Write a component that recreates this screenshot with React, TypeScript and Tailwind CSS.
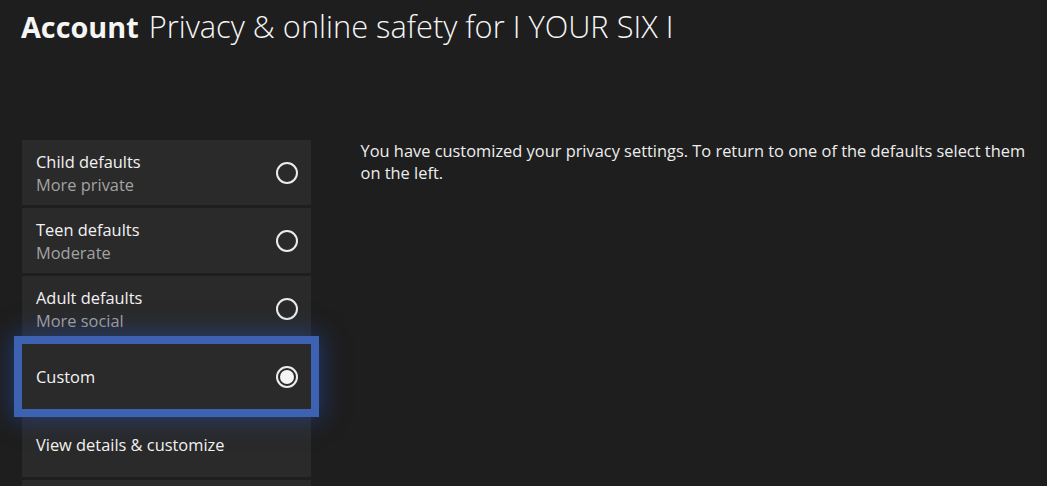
import React from "react";

interface Option {
  title: string;
  subtitle?: string;
  selected?: boolean;
  radio?: boolean;
}

const options: Option[] = [
  { title: "Child defaults", subtitle: "More private", radio: true },
  { title: "Teen defaults", subtitle: "Moderate", radio: true },
  { title: "Adult defaults", subtitle: "More social", radio: true },
  { title: "Custom", radio: true, selected: true },
  { title: "View details & customize" },
];

const Radio = ({ selected }: { selected?: boolean }) => (
  <svg width="24" height="24" viewBox="0 0 24 24" className="shrink-0">
    <circle cx="12" cy="12" r="10" fill="none" stroke="#ececec" strokeWidth="2" />
    {selected && <circle cx="12" cy="12" r="7" fill="#f4f4f4" />}
  </svg>
);

const OptionRow = ({ option }: { option: Option }) => {
  const focused = option.selected;
  return (
    <div
      className={
        "flex h-[65px] items-center justify-between bg-[#2a2a2a] pl-[14px] pr-[12px] " +
        (focused
          ? "outline-[8px] outline-solid outline-[#3d62b2] shadow-[0_0_22px_10px_rgba(35,80,190,0.5)] relative z-10"
          : "")
      }
    >
      <div className="flex flex-col pt-[1px]">
        <span className="text-[16.4px] leading-[22px] text-[#f2f2f2]">{option.title}</span>
        {option.subtitle && (
          <span className="text-[16.4px] leading-[23px] text-[#a3a3a3]">{option.subtitle}</span>
        )}
      </div>
      {option.radio && <Radio selected={option.selected} />}
    </div>
  );
};

export default function App() {
  return (
    <div
      className="h-[486px] w-full overflow-hidden bg-[#1e1e1e] text-white"
      style={{ fontFamily: '"Open Sans", "Noto Sans", sans-serif' }}
    >
      <h1 className="flex h-[48px] items-baseline pl-[21px] pt-[4px] leading-[44px] text-[#f5f5f5]">
        <span className="text-[28.8px] font-bold">Account</span>
        <span className="ml-[10px] text-[30.8px] font-light">
          Privacy &amp; online safety for I YOUR SIX I
        </span>
      </h1>
      <div className="mt-[92px] flex">
        <div className="ml-[22px] flex w-[290px] flex-col gap-[3px]">
          {options.map((o) => (
            <OptionRow key={o.title} option={o} />
          ))}
          <div className="h-[65px] bg-[#2a2a2a]" />
        </div>
        <p className="ml-[50px] w-[690px] text-[16.4px] leading-[22px] text-[#ededed]">
          You have customized your privacy settings. To return to one of the defaults select them
          <br />
          on the left.
        </p>
      </div>
    </div>
  );
}
